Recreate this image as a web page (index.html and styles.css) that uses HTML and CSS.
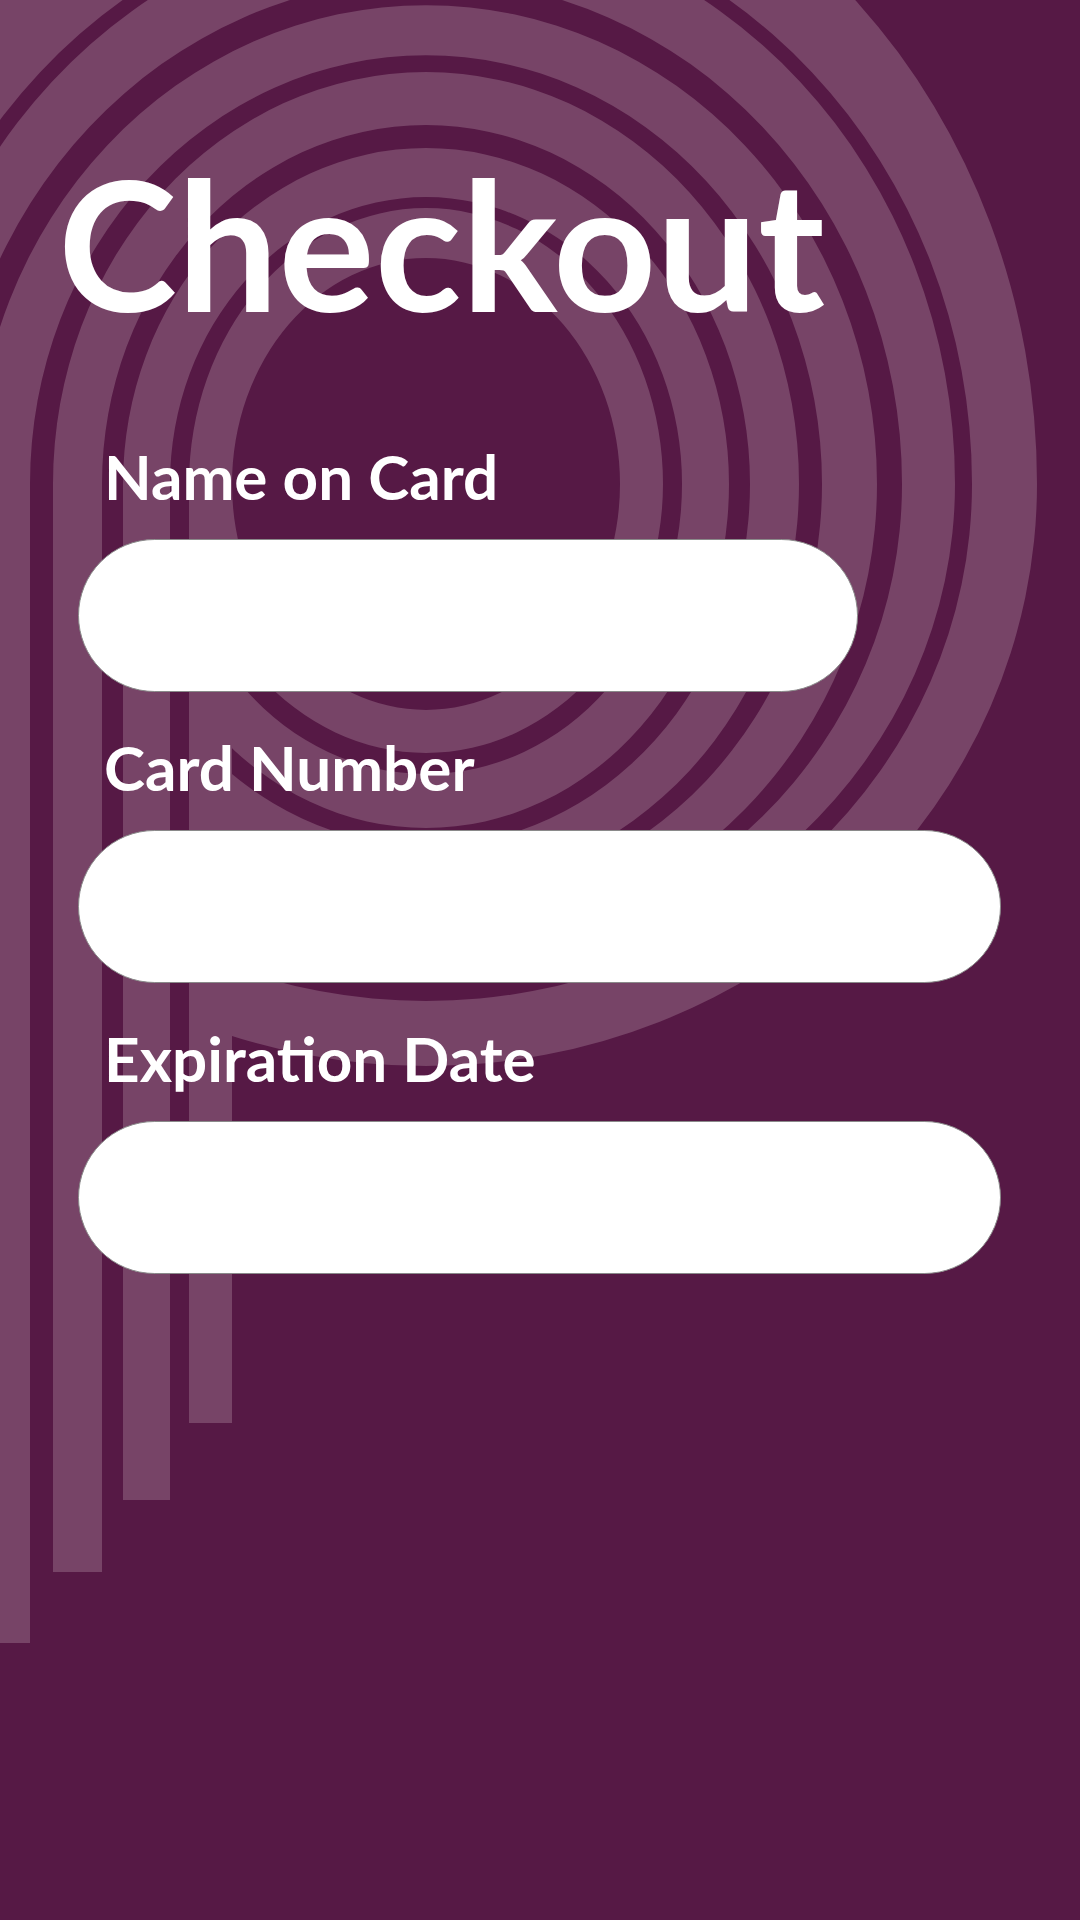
FILE: index.html
```html
<!DOCTYPE html>
<html lang="en">
<head>
<meta charset="utf-8">
<title>Checkout</title>
<link rel="stylesheet" href="styles.css">
</head>
<body>
<div class="page">
  <svg class="backdrop" viewBox="0 0 1080 1920" width="1080" height="1920" aria-hidden="true">
    <defs>
      <clipPath id="ringClip">
        <rect x="0" y="0" width="1080" height="484"/>
        <rect x="232" y="484" width="848" height="1436"/>
      </clipPath>
    </defs>
    <g class="rings" clip-path="url(#ringClip)">
      <path fill-rule="evenodd" d="M189 484A237 276 0 0 1 663 484A237 269 0 0 1 189 484Z M232 484A194 226 0 0 1 620 484A194 226 0 0 1 232 484Z"/>
      <path fill-rule="evenodd" d="M123 484A303 336 0 0 1 729 484A303 344 0 0 1 123 484Z M170 484A256 287 0 0 1 682 484A256 290 0 0 1 170 484Z"/>
      <path fill-rule="evenodd" d="M53 484A373 412 0 0 1 799 484A373 405 0 0 1 53 484Z M102 484A324 359 0 0 1 750 484A324 362 0 0 1 102 484Z"/>
      <path fill-rule="evenodd" d="M-25 484A451 479 0 0 1 877 484A451 460 0 0 1 -25 484Z M30 484A396 429 0 0 1 822 484A396 420 0 0 1 30 484Z"/>
      <path fill-rule="evenodd" d="M-103 484A529 569 0 0 1 955 484A529 497 0 0 1 -103 484Z M-50 484A476 505 0 0 1 902 484A476 470 0 0 1 -50 484Z"/>
      <path fill-rule="evenodd" d="M-185 484A611 680 0 0 1 1037 484A611 582 0 0 1 -185 484Z M-120 484A546 582 0 0 1 972 484A546 517 0 0 1 -120 484Z"/>
    </g>
    <g class="rings">
      <rect x="-25" y="484" width="55" height="1159"/>
      <rect x="53" y="484" width="49" height="1088"/>
      <rect x="123" y="484" width="47" height="1016"/>
      <rect x="189" y="484" width="43" height="939"/>
    </g>
  </svg>

  <main class="checkout">
    <h1 class="title">Checkout</h1>
    <div class="field">
      <label class="label" for="name">Name on Card</label>
      <input class="input input-short" id="name" type="text">
    </div>
    <div class="field">
      <label class="label" for="number">Card Number</label>
      <input class="input" id="number" type="text">
    </div>
    <div class="field">
      <label class="label" for="exp">Expiration Date</label>
      <input class="input" id="exp" type="text">
    </div>
  </main>
</div>
</body>
</html>
```

FILE: styles.css
```css
html, body {
  margin: 0;
  padding: 0;
  background: #561945;
}

.page {
  position: relative;
  width: 1080px;
  height: 1920px;
  overflow: hidden;
  background: #561945;
  font-family: Lato, "Open Sans", "Liberation Sans", sans-serif;
  color: #ffffff;
}

.backdrop {
  position: absolute;
  left: 0;
  top: 0;
  display: block;
}

.rings {
  fill: #774467;
}

.checkout {
  position: relative;
  display: flex;
  flex-direction: column;
  gap: 44px;
  padding: 152px 78px 0 78px;
}

.title {
  margin: 0 0 69px -20px;
  font-size: 180px;
  line-height: 180px;
  font-weight: 700;
  letter-spacing: 0;
}

.field {
  display: flex;
  flex-direction: column;
  gap: 32px;
}

.label {
  padding-left: 26px;
  font-size: 62px;
  line-height: 62px;
  font-weight: 700;
}

.input {
  box-sizing: border-box;
  width: 923px;
  height: 153px;
  margin: 0;
  padding: 0 60px;
  border: 1px solid #8a8a8a;
  border-radius: 77px;
  background: #ffffff;
  font: inherit;
  font-size: 48px;
  color: #222;
  outline: none;
}

.input-short {
  width: 780px;
}
```
